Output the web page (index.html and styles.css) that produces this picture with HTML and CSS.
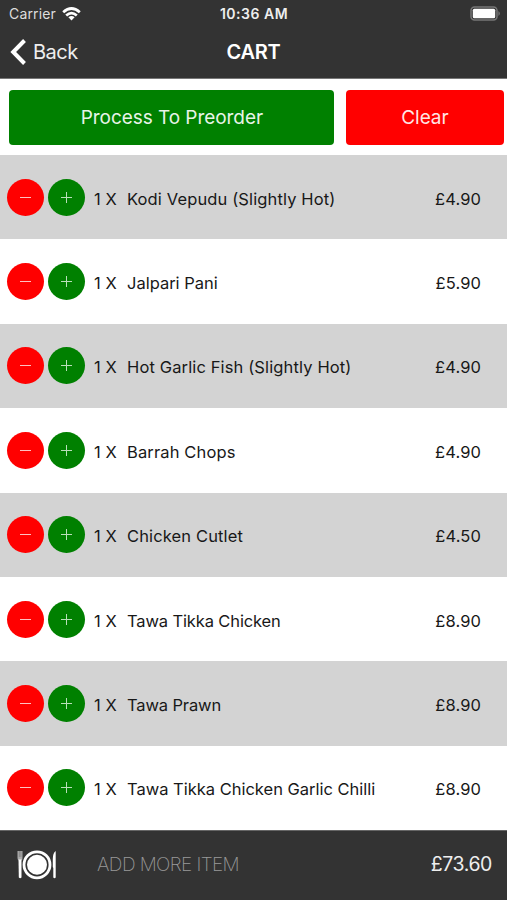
FILE: index.html
```html
<!DOCTYPE html>
<html lang="en">
<head>
<meta charset="utf-8">
<title>Cart</title>
<link rel="stylesheet" href="styles.css">
</head>
<body>
<div class="app">
  <header class="header">
    <div class="status">
      <div class="carrier"><span>Carrier</span>
        <svg class="wifi" width="19" height="14" viewBox="0 0 19 14" fill="none" stroke="#fff" stroke-width="2.7"><path d="M1.2 5.3Q9.500-2.300 17.800 5.300M4.200 8.600Q9.500 3.700 14.800 8.600"/><path d="M6.400 10.200Q9.500 7.700 12.600 10.200L9.500 13.500Z" fill="#fff" stroke="none"/></svg>
      </div>
      <div class="time">10:36 AM</div>
      <svg class="battery" width="31" height="15" viewBox="0 0 31 15"><rect x="1" y="1" width="26" height="13" rx="3.500" fill="none" stroke="#777" stroke-width="1.500"/><rect x="2.800" y="2.800" width="22.400" height="9.400" rx="1.500" fill="#fff"/><path d="M28.500 5Q31 7.500 28.500 10Z" fill="#858585"/></svg>
    </div>
    <nav class="nav">
      <div class="back"><svg width="16" height="26" viewBox="0 0 16 26" fill="none" stroke="#fff" stroke-width="4"><path d="M14.500 1.500L3.200 13L14.500 24.500"/></svg><span>Back</span></div>
      <h1 class="title">CART</h1>
    </nav>
  </header>
  <div class="actions"><button class="button process">Process To Preorder</button><button class="button clear">Clear</button></div>
  <main class="list">
    <div class="row"><button class="round minus"></button><button class="round plus"></button><span class="qty">1 X</span><span class="name">Kodi Vepudu (Slightly Hot)</span><span class="price">£4.90</span></div>
    <div class="row"><button class="round minus"></button><button class="round plus"></button><span class="qty">1 X</span><span class="name long">Jalpari Pani</span><span class="price">£5.90</span></div>
    <div class="row"><button class="round minus"></button><button class="round plus"></button><span class="qty">1 X</span><span class="name">Hot Garlic Fish (Slightly Hot)</span><span class="price">£4.90</span></div>
    <div class="row"><button class="round minus"></button><button class="round plus"></button><span class="qty">1 X</span><span class="name">Barrah Chops</span><span class="price">£4.90</span></div>
    <div class="row"><button class="round minus"></button><button class="round plus"></button><span class="qty">1 X</span><span class="name">Chicken Cutlet</span><span class="price">£4.50</span></div>
    <div class="row"><button class="round minus"></button><button class="round plus"></button><span class="qty">1 X</span><span class="name tight">Tawa Tikka Chicken</span><span class="price">£8.90</span></div>
    <div class="row"><button class="round minus"></button><button class="round plus"></button><span class="qty">1 X</span><span class="name tight">Tawa Prawn</span><span class="price">£8.90</span></div>
    <div class="row"><button class="round minus"></button><button class="round plus"></button><span class="qty">1 X</span><span class="name long">Tawa Tikka Chicken Garlic Chilli</span><span class="price">£8.90</span></div>
  </main>
  <footer class="footer">
    <svg class="plate" width="40" height="30" viewBox="0 0 40 30"><path d="M.5 1V8Q.500 10 2 10.500H4.500Q5.500 10 5.500 8V1Z" fill="#aaa"/><path d="M2.300 1V7M3.900 1V7" stroke="#666" stroke-width=".5"/><path d="M1.500 9.500H4.500V27.500Q3.200 29 1.800 27.500Z" fill="#fff"/><circle cx="20" cy="14.800" r="13" fill="none" stroke="#fff" stroke-width="2.800"/><circle cx="20" cy="14.800" r="10" fill="#fff"/><path d="M38.700 1Q35.800 3 35.800 9V17L36.300 18V27.500Q37.500 29 38.700 27.500V1Z" fill="#fff"/></svg>
    <span class="add">ADD MORE ITEM</span><span class="total">£73.60</span>
  </footer>
</div>
</body>
</html>
```
FILE: styles.css
```css
* { box-sizing: border-box; }
body { margin: 0; background: #fff; font-family: Inter, "Liberation Sans", sans-serif; }
button { border: 0; padding: 0; font: inherit; }
svg { display: block; flex: none; }
.app { width: 507px; height: 900px; display: flex; flex-direction: column; overflow: hidden; }
.header { flex: none; height: 79px; background: #333; color: #fff; border-bottom: 1px solid #777; }
.status { height: 27px; display: grid; grid-template-columns: 1fr auto 1fr; align-items: center; padding: 0 6px 0 9px; }
.carrier { display: flex; align-items: center; gap: 6px; font-size: 14px; color: #ddd; letter-spacing: .15px; }
.time { font-size: 14px; font-weight: 600; letter-spacing: .5px; color: #eee; margin-right: 2px; }
.battery { justify-self: end; }
.nav { height: 50px; display: grid; grid-template-columns: 1fr auto 1fr; align-items: center; }
.back { display: flex; align-items: center; gap: 7px; padding-left: 10px; font-size: 20px; color: #eee; letter-spacing: -.5px; }
.title { margin: 0; font-size: 20px; font-weight: 600; letter-spacing: -.2px; }
.actions { flex: none; height: 76px; display: flex; gap: 12px; padding: 11px 3.500px 11px 9.4px; }
.button { height: 54.5px; border-radius: 4px; color: #e8f4e8; font-size: 19px; letter-spacing: -.05px; }
.process { width: 325px; background: #008000; }
.clear { flex: 1; background: #f00; color: #ffe5e5; }
.list { flex: none; height: 675px; display: grid; grid-template-rows: repeat(8, 1fr); }
.row { display: flex; align-items: center; padding: 0 26px 0 7px; font-size: 16.500px; color: #181818; }
.row:nth-child(odd) { background: #d3d3d3; }
.row:nth-child(even) { background: #fff; }
.round { width: 37px; height: 37px; flex: none; border-radius: 50%; background: #f00; display: grid; place-items: center; }
.round::before, .round::after { content: ""; grid-area: 1 / 1; width: 11px; height: 1px; background: #ffc0c0; }
.minus::after { display: none; }
.plus { margin-left: 4px; background: #008000; }
.plus::before, .plus::after { background: #b9dfb9; }
.plus::after { width: 1px; height: 11px; }
.qty, .name, .price { padding-top: 3px; white-space: nowrap; }
.qty { width: 33px; margin-left: 9px; letter-spacing: .1px; }
.name { flex: 1; letter-spacing: .13px; }
.name.tight { letter-spacing: -.13px; }
.name.long { letter-spacing: -.01px; }
.price { letter-spacing: .1px; }
.footer { flex: 1; background: #333; border-top: 1px solid #666; display: flex; align-items: center; padding: 0 15px 3px 17px; }
.plate { margin-top: 2px; }
.add { margin-left: 40px; flex: 1; font-size: 19px; font-weight: 200; color: #999; letter-spacing: -.6px; }
.total { font-size: 19.5px; color: #eee; letter-spacing: -.4px; }
```
